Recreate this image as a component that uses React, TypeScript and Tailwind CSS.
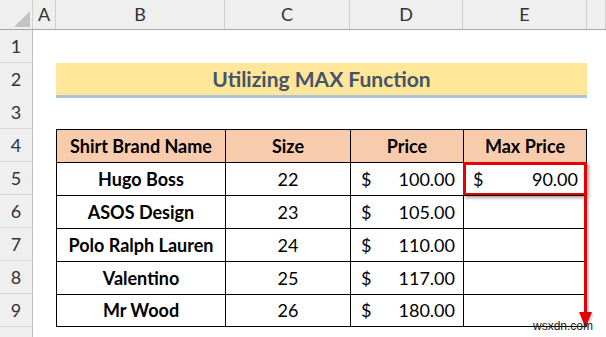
import React from 'react'

const cols = 'grid grid-cols-[33px_23px_169px_125px_113px_124px_1fr]'
const font = { fontFamily: 'Lato, "Open Sans", sans-serif' }

const rows = [
  { n: 5, brand: 'Hugo Boss', size: 22, price: '100.00' },
  { n: 6, brand: 'ASOS Design', size: 23, price: '105.00' },
  { n: 7, brand: 'Polo Ralph Lauren', size: 24, price: '110.00' },
  { n: 8, brand: 'Valentino', size: 25, price: '117.00' },
  { n: 9, brand: 'Mr Wood', size: 26, price: '180.00' },
]

function RowNum({ n }: { n?: number }) {
  return (
    <div className="flex items-center justify-center border-r border-b border-r-[#bdbdbd] border-b-[#d6d6d6] bg-[#efefef] text-[18px] text-[#333]">
      {n}
    </div>
  )
}

export default function App() {
  return (
    <div className="relative h-[337px] w-[606px] overflow-hidden bg-white text-black" style={font}>
      {/* column headers */}
      <div className={`${cols} h-[30px] border-b border-[#a6a6a6] bg-[#efefef] text-[18px] text-[#333]`}>
        <div className="border-r border-[#d0d0d0]">
          <svg width="33" height="29">
            <polygon points="30,11 30,27 14,27" fill="#c3c3c3" />
          </svg>
        </div>
        {['A', 'B', 'C', 'D', 'E', ''].map((c) => (
          <div key={c} className="flex items-center justify-center border-r border-[#d0d0d0]">{c}</div>
        ))}
      </div>

      {/* row 1 */}
      <div className={`${cols} h-[33px]`}>
        <RowNum n={1} />
      </div>

      {/* row 2 title */}
      <div className={`${cols} h-[33px]`}>
        <RowNum n={2} />
        <div />
        <div className="col-span-4 flex items-center justify-center border-b-[3px] border-[#acc3da] bg-[#ffe699] text-[21px] font-bold text-[#44546a]">
          Utilizing MAX Function
        </div>
      </div>

      {/* row 3 */}
      <div className={`${cols} h-[33px]`}>
        <RowNum n={3} />
      </div>

      {/* row 4 headers */}
      <div className={`${cols} h-[33px]`}>
        <RowNum n={4} />
        <div />
        {['Shirt Brand Name', 'Size', 'Price', 'Max Price'].map((h, i) => (
          <div
            key={h}
            className={`flex items-center justify-center border-t border-l border-black bg-[#f8cbad] text-[18px] font-bold ${i === 3 ? 'border-r' : ''}`}
          >
            {h}
          </div>
        ))}
      </div>

      {rows.map((r, idx) => {
        const last = idx === rows.length - 1
        const cell = `border-t border-l border-black ${last ? 'border-b' : ''}`
        return (
          <div key={r.n} className={`${cols} h-[33px]`}>
            <RowNum n={r.n} />
            <div />
            <div className={`${cell} flex items-center justify-center text-[18px] font-bold`}>{r.brand}</div>
            <div className={`${cell} flex items-center justify-center text-[18px]`}>{r.size}</div>
            <div className={`${cell} flex items-center justify-between pl-[10px] pr-[8px] text-[18px]`}>
              <span>$</span>
              <span>{r.price}</span>
            </div>
            <div className={`${cell} relative flex items-center justify-between border-r pl-[9px] pr-[8px] text-[18px]`}>
              {idx === 0 && (
                <>
                  <span>$</span>
                  <span>90.00</span>
                  <div className="absolute -top-px -left-px -right-px -bottom-px border-[3px] border-[#e60000] shadow-[2px_2px_3px_rgba(0,0,0,0.35)]" />
                </>
              )}
            </div>
          </div>
        )
      })}

      <div className={`${cols} h-[33px]`}>
        <RowNum />
      </div>

      {/* arrow */}
      <svg className="absolute left-0 top-0" width="606" height="337">
        <line x1="588" y1="197" x2="588" y2="314" stroke="rgba(0,0,0,0.15)" strokeWidth="2" />
        <polygon points="581,314 594,314 588,330" fill="rgba(0,0,0,0.12)" />
        <line x1="585.5" y1="195" x2="585.5" y2="314" stroke="#e60000" strokeWidth="3" />
        <polygon points="579,312 592,312 585.5,328" fill="#e60000" />
      </svg>

      <div className="absolute left-[533px] top-[317px] text-[12px] text-[#222]" style={{ fontFamily: '"Liberation Sans", sans-serif' }}>
        wsxdn.com
      </div>
    </div>
  )
}
